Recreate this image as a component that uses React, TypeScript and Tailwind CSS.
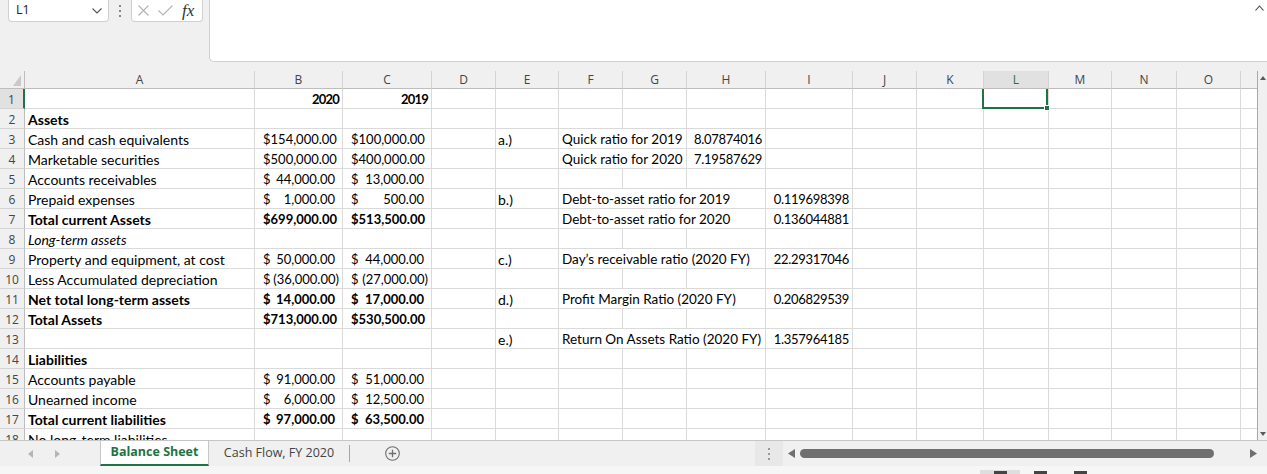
import type { ReactNode } from "react";

const GRID_COLS =
  "grid grid-cols-[25px_230px_88px_89px_64px_63px_64px_64px_79px_87px_64px_67px_65px_63px_65px_64px_17px]";

const COLUMN_LETTERS = ["A", "B", "C", "D", "E", "F", "G", "H", "I", "J", "K", "L", "M", "N", "O", ""];

const SELECTED_COL = 11;
const SELECTED_ROW = 1;

type CellKind = "text" | "ratio" | "acct" | "num" | "year" | "label";

type CellSpec = {
  col: number;
  value: string;
  kind?: CellKind;
  span?: 2 | 3;
  bold?: boolean;
  italic?: boolean;
};

const ROWS: CellSpec[][] = [
  [
    { col: 1, value: "2020", kind: "year", bold: true },
    { col: 2, value: "2019", kind: "year", bold: true },
  ],
  [{ col: 0, value: "Assets", bold: true }],
  [
    { col: 0, value: "Cash and cash equivalents" },
    { col: 1, value: "154,000.00", kind: "acct" },
    { col: 2, value: "100,000.00", kind: "acct" },
    { col: 4, value: "a.)", kind: "label" },
    { col: 5, value: "Quick ratio for 2019", kind: "ratio", span: 2 },
    { col: 7, value: "8.07874016", kind: "num" },
  ],
  [
    { col: 0, value: "Marketable securities" },
    { col: 1, value: "500,000.00", kind: "acct" },
    { col: 2, value: "400,000.00", kind: "acct" },
    { col: 5, value: "Quick ratio for 2020", kind: "ratio", span: 2 },
    { col: 7, value: "7.19587629", kind: "num" },
  ],
  [
    { col: 0, value: "Accounts receivables" },
    { col: 1, value: "44,000.00", kind: "acct" },
    { col: 2, value: "13,000.00", kind: "acct" },
  ],
  [
    { col: 0, value: "Prepaid expenses" },
    { col: 1, value: "1,000.00", kind: "acct" },
    { col: 2, value: "500.00", kind: "acct" },
    { col: 4, value: "b.)", kind: "label" },
    { col: 5, value: "Debt-to-asset ratio for 2019", kind: "ratio", span: 3 },
    { col: 8, value: "0.119698398", kind: "num" },
  ],
  [
    { col: 0, value: "Total current Assets", bold: true },
    { col: 1, value: "699,000.00", kind: "acct", bold: true },
    { col: 2, value: "513,500.00", kind: "acct", bold: true },
    { col: 5, value: "Debt-to-asset ratio for 2020", kind: "ratio", span: 3 },
    { col: 8, value: "0.136044881", kind: "num" },
  ],
  [{ col: 0, value: "Long-term assets", italic: true }],
  [
    { col: 0, value: "Property and equipment, at cost" },
    { col: 1, value: "50,000.00", kind: "acct" },
    { col: 2, value: "44,000.00", kind: "acct" },
    { col: 4, value: "c.)", kind: "label" },
    { col: 5, value: "Day’s receivable ratio (2020 FY)", kind: "ratio", span: 3 },
    { col: 8, value: "22.29317046", kind: "num" },
  ],
  [
    { col: 0, value: "Less Accumulated depreciation" },
    { col: 1, value: "(36,000.00)", kind: "acct" },
    { col: 2, value: "(27,000.00)", kind: "acct" },
  ],
  [
    { col: 0, value: "Net total long-term assets", bold: true },
    { col: 1, value: "14,000.00", kind: "acct", bold: true },
    { col: 2, value: "17,000.00", kind: "acct", bold: true },
    { col: 4, value: "d.)", kind: "label" },
    { col: 5, value: "Profit Margin Ratio (2020 FY)", kind: "ratio", span: 3 },
    { col: 8, value: "0.206829539", kind: "num" },
  ],
  [
    { col: 0, value: "Total Assets", bold: true },
    { col: 1, value: "713,000.00", kind: "acct", bold: true },
    { col: 2, value: "530,500.00", kind: "acct", bold: true },
  ],
  [
    { col: 4, value: "e.)", kind: "label" },
    { col: 5, value: "Return On Assets Ratio (2020 FY)", kind: "ratio", span: 3 },
    { col: 8, value: "1.357964185", kind: "num" },
  ],
  [{ col: 0, value: "Liabilities", bold: true }],
  [
    { col: 0, value: "Accounts payable" },
    { col: 1, value: "91,000.00", kind: "acct" },
    { col: 2, value: "51,000.00", kind: "acct" },
  ],
  [
    { col: 0, value: "Unearned income" },
    { col: 1, value: "6,000.00", kind: "acct" },
    { col: 2, value: "12,500.00", kind: "acct" },
  ],
  [
    { col: 0, value: "Total current liabilities", bold: true },
    { col: 1, value: "97,000.00", kind: "acct", bold: true },
    { col: 2, value: "63,500.00", kind: "acct", bold: true },
  ],
  [{ col: 0, value: "No long-term liabilities" }],
];

function CellContent({ cell }: { cell: CellSpec }) {
  const weight = cell.bold ? "font-bold" : "";
  const style = cell.italic ? "italic" : "";
  if (cell.kind === "acct") {
    const negative = cell.value.startsWith("(");
    return (
      <div
        className={`flex justify-between pl-[8px] text-[13px] ${negative ? "pr-[3px]" : "pr-[7px]"} ${weight}`}
      >
        <span>$</span>
        <span>{cell.value}</span>
      </div>
    );
  }
  if (cell.kind === "year") {
    return <div className={`pr-[3px] text-right text-[13px] tracking-[-0.8px] ${weight}`}>{cell.value}</div>;
  }
  if (cell.kind === "num") {
    return <div className="pr-[3px] text-right text-[13px] tracking-[-0.3px]">{cell.value}</div>;
  }
  if (cell.kind === "label") {
    return <div className="pl-[2px] text-[14px]">{cell.value}</div>;
  }
  if (cell.kind === "ratio") {
    return <div className="pl-[3px] text-[13.5px]">{cell.value}</div>;
  }
  return <div className={`pl-[3px] text-[14px] ${weight} ${style}`}>{cell.value}</div>;
}

function SheetRow({ index, cells }: { index: number; cells: CellSpec[] }) {
  const selectedRow = index === SELECTED_ROW;
  const out: ReactNode[] = [];
  for (let c = 0; c < 16; ) {
    const cell = cells.find((x) => x.col === c);
    const span = cell?.span ?? 1;
    const spanClass = span === 3 ? "col-span-3" : span === 2 ? "col-span-2" : "";
    const isSelected = selectedRow && c === SELECTED_COL;
    out.push(
      <div
        key={c}
        className={`${spanClass} relative h-[20px] whitespace-nowrap border-b border-r border-[#dadada] pt-[1px] leading-[19px]`}
      >
        <div className="overflow-hidden">{cell ? <CellContent cell={cell} /> : null}</div>
        {isSelected && (
          <div className="absolute -left-[2px] -top-[2px] z-10 h-[22px] w-[66px] border-2 border-[#217346]">
            <span className="absolute -bottom-[4px] -right-[4px] size-[6px] border border-white bg-[#217346]" />
          </div>
        )}
      </div>
    );
    c += span;
  }

  return (
    <div className={GRID_COLS}>
      <div
        className={`h-[20px] border-b border-[#d4d4d4] pt-[1px] text-center font-['Open_Sans',sans-serif] text-[12px] leading-[19px] ${
          selectedRow
            ? "border-r-2 border-r-[#217346] bg-[#e1e1e1] text-[#444]"
            : "border-r border-r-[#bdbdbd] bg-[#f0f0f0] text-[#444]"
        }`}
      >
        {index}
      </div>
      {out}
    </div>
  );
}

function ColumnHeader() {
  return (
    <div className={`${GRID_COLS} h-[18px] font-['Open_Sans',sans-serif] text-[12px] text-[#444]`}>
      <div className="relative border-b border-r border-[#bdbdbd] bg-[#f0f0f0]">
        <svg className="absolute bottom-[2px] right-[3px]" width="8" height="11" viewBox="0 0 8 11">
          <polygon points="8,0 8,11 0,11" fill="#c9c9c9" />
        </svg>
      </div>
      {COLUMN_LETTERS.map((letter, i) => (
        <div
          key={i}
          className={`border-b border-r border-b-[#bdbdbd] border-r-[#d4d4d4] text-center leading-[17px] ${
            i === SELECTED_COL ? "bg-[#e1e1e1] text-[#217346]" : "bg-[#f0f0f0]"
          }`}
        >
          {letter}
        </div>
      ))}
    </div>
  );
}

function FormulaBar() {
  return (
    <div className="flex h-[62px] shrink-0 items-start">
      <div className="ml-[8px] flex h-[22px] w-[101px] items-center justify-between rounded-b-[4px] border border-t-0 border-[#d1d1d1] bg-white pl-[7px] pr-[6px]">
        <span className="font-['Open_Sans',sans-serif] text-[12.5px] text-[#222]">L1</span>
        <svg width="10" height="6" viewBox="0 0 10 6" fill="none">
          <path d="M0.5 0.5 L5 5 L9.5 0.5" stroke="#555" strokeWidth="1.1" />
        </svg>
      </div>
      <div className="flex h-[22px] w-[22px] flex-col items-center justify-center gap-[3px]">
        <span className="size-[2px] bg-[#888]" />
        <span className="size-[2px] bg-[#888]" />
        <span className="size-[2px] bg-[#888]" />
      </div>
      <div className="flex h-[22px] w-[72px] items-center gap-[9px] rounded-b-[4px] border border-t-0 border-[#d1d1d1] bg-white pl-[6px]">
        <svg width="11" height="11" viewBox="0 0 11 11" fill="none">
          <path d="M0.5 0.5 L10.5 10.5 M10.5 0.5 L0.5 10.5" stroke="#b4b4b4" strokeWidth="1.1" />
        </svg>
        <svg width="15" height="11" viewBox="0 0 15 11" fill="none">
          <path d="M0.5 5.5 L5 10 L14.5 0.5" stroke="#b4b4b4" strokeWidth="1.1" />
        </svg>
        <span className="font-['Liberation_Serif',serif] text-[17px] italic leading-none text-[#333]">
          fx
        </span>
      </div>
      <div className="relative ml-[6px] h-[62px] flex-1 rounded-bl-[5px] border-b border-l border-[#d1d1d1] bg-white">
        <svg className="absolute right-[3px] top-[5px]" width="9" height="6" viewBox="0 0 9 6" fill="none">
          <path d="M0.5 5.5 L4.5 1 L8.5 5.5" stroke="#444" strokeWidth="1.1" />
        </svg>
      </div>
    </div>
  );
}

function TabBar() {
  return (
    <div className="flex h-[26px] shrink-0 items-stretch border-t border-[#c6c6c6] bg-[#f0f0f0] font-['Open_Sans',sans-serif] text-[12.5px]">
      <div className="flex w-[100px] items-center gap-[22px] pl-[28px]">
        <svg width="5" height="8" viewBox="0 0 5 8">
          <polygon points="5,0 5,8 0,4" fill="#b5b5b5" />
        </svg>
        <svg width="5" height="8" viewBox="0 0 5 8">
          <polygon points="0,0 0,8 5,4" fill="#b5b5b5" />
        </svg>
      </div>
      <div className="flex w-[109px] items-center justify-center border-b-2 border-x border-b-[#217346] border-x-[#c6c6c6] bg-white font-bold text-[#217346]">
        Balance Sheet
      </div>
      <div className="flex w-[140px] items-center justify-center text-[#444]">Cash Flow, FY 2020</div>
      <div className="flex items-center">
        <span className="h-[17px] w-px bg-[#a6a6a6]" />
      </div>
      <div className="flex w-[84px] items-center justify-center">
        <svg width="15" height="15" viewBox="0 0 15 15" fill="none">
          <circle cx="7.5" cy="7.5" r="6.8" stroke="#6e6e6e" strokeWidth="1.1" />
          <path d="M7.5 3.8 V11.2 M3.8 7.5 H11.2" stroke="#6e6e6e" strokeWidth="1.3" />
        </svg>
      </div>
      <div className="flex-1" />
      <div className="flex w-[28px] flex-col items-center justify-center gap-[3px] bg-[#e8e8e8]">
        <span className="size-[2px] bg-[#999]" />
        <span className="size-[2px] bg-[#999]" />
        <span className="size-[2px] bg-[#999]" />
      </div>
      <div className="flex w-[475px] items-center pl-[5px] pr-[1px]">
        <svg width="7" height="9" viewBox="0 0 7 9">
          <polygon points="7,0 7,9 0,4.5" fill="#6f6f6f" />
        </svg>
        <div className="ml-[5px] h-[9px] w-[414px] rounded-full bg-[#6f6f6f]" />
        <div className="flex-1" />
        <svg width="7" height="9" viewBox="0 0 7 9">
          <polygon points="0,0 0,9 7,4.5" fill="#6f6f6f" />
        </svg>
      </div>
      <div className="w-[9px]" />
    </div>
  );
}

function StatusStrip() {
  return (
    <div className="flex h-[8px] shrink-0 items-end bg-[#f6f6f6]">
      <div className="w-[980px]" />
      <div className="flex h-[4px] w-[40px] items-start justify-center bg-[#dedede] pt-[1px]">
        <span className="h-[3px] w-[13px] bg-[#444]" />
      </div>
      <div className="flex h-[4px] w-[40px] items-start justify-center pt-[1px]">
        <span className="h-[3px] w-[13px] bg-[#444]" />
      </div>
      <div className="flex h-[4px] w-[40px] items-start justify-center pt-[1px]">
        <span className="h-[3px] w-[13px] bg-[#444]" />
      </div>
    </div>
  );
}

export default function App() {
  return (
    <div className="flex h-[474px] w-[1267px] flex-col overflow-hidden bg-[#f0f0f0]">
      <FormulaBar />
      <div className="h-[9px] shrink-0" />
      <div className="flex h-[369px] shrink-0">
        <div className="w-[1258px] overflow-hidden border-r border-[#a9a9a9] bg-white font-['Lato',sans-serif] text-[14px] text-black">
          <ColumnHeader />
          <div className="h-[351px] overflow-hidden">
            {ROWS.map((cells, i) => (
              <SheetRow key={i} index={i + 1} cells={cells} />
            ))}
          </div>
        </div>
        <div className="flex w-[9px] flex-col items-center justify-between bg-[#f0f0f0] pb-[4px] pt-[5px]">
          <svg width="6" height="4" viewBox="0 0 6 4">
            <polygon points="0,4 6,4 3,0" fill="#5a5a5a" />
          </svg>
          <svg width="6" height="4" viewBox="0 0 6 4">
            <polygon points="0,0 6,0 3,4" fill="#5a5a5a" />
          </svg>
        </div>
      </div>
      <TabBar />
      <StatusStrip />
    </div>
  );
}
